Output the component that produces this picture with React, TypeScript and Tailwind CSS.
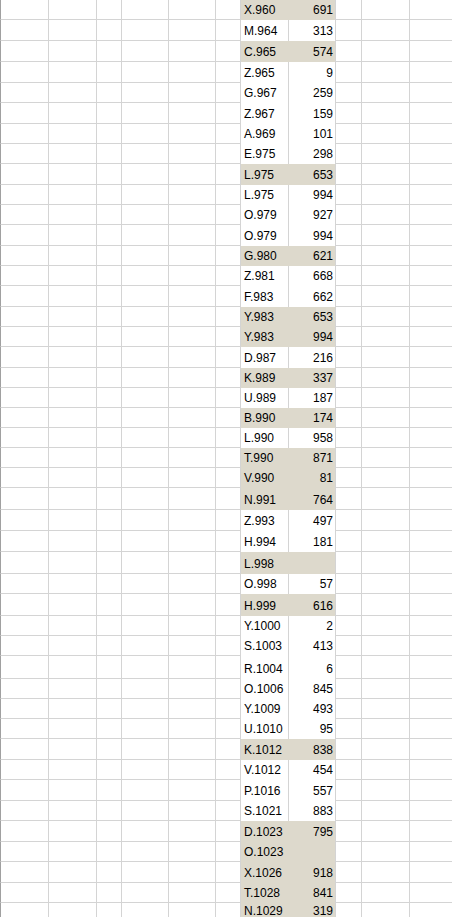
import React from "react";

type Row = { name: string; value: string; hl: boolean; h: number };

const names = [
  "X.960","M.964","C.965","Z.965","G.967","Z.967","A.969","E.975","L.975","L.975",
  "O.979","O.979","G.980","Z.981","F.983","Y.983","Y.983","D.987","K.989","U.989",
  "B.990","L.990","T.990","V.990","N.991","Z.993","H.994","L.998","O.998","H.999",
  "Y.1000","S.1003","R.1004","O.1006","Y.1009","U.1010","K.1012","V.1012","P.1016","S.1021",
  "D.1023","O.1023","X.1026","T.1028","N.1029",
];
const values = [
  "691","313","574","9","259","159","101","298","653","994",
  "927","994","621","668","662","653","994","216","337","187",
  "174","958","871","81","764","497","181","","57","616",
  "2","413","6","845","493","95","838","454","557","883",
  "795","","918","841","319",
];
const hlIdx = new Set([0,2,8,12,15,16,18,20,22,23,24,27,29,36,40,41,42,43,44]);
const heights = [
  20,
  21,21,21,20,21,20,20,21,20,20,
  21,20,20,21,20,20,21,20,20,20,
  20,20,20,22,21,21,22,20,22,20,
  20,23,20,20,20,21,20,21,20,21,
  20,21,20,
  15,
];

const rows: Row[] = names.map((n, i) => ({
  name: n,
  value: values[i],
  hl: hlIdx.has(i),
  h: heights[i],
}));

const grid = "border-[#d4d4d4]";

function GridRow({ r, last }: { r: Row; last: boolean }) {
  const bg = r.hl ? "bg-[#ddd9cc]" : "bg-white";
  const pb = last ? "pb-0" : "pb-[3px]";
  return (
    <div className="flex w-full shrink-0" style={{ height: r.h }}>
      <div className={`w-[49px] shrink-0 border-l border-l-[#a0a0a0] border-r border-b ${grid}`} />
      <div className={`w-[48px] shrink-0 border-r border-b ${grid}`} />
      <div className={`w-[25px] shrink-0 border-r border-b ${grid}`} />
      <div className={`w-[47px] shrink-0 border-r border-b ${grid}`} />
      <div className={`w-[47px] shrink-0 border-r border-b ${grid}`} />
      <div className={`w-[25px] shrink-0 border-r border-b ${grid}`} />
      <div
        className={`w-[48px] shrink-0 flex items-end pl-[3px] ${pb} ${bg} ${
          r.hl ? "" : `border-r ${grid}`
        }`}
      >
        <span className="leading-[14px]">{r.name}</span>
      </div>
      <div className={`w-[47px] shrink-0 flex items-end justify-end pr-[2px] ${pb} border-r ${grid} ${bg}`}>
        <span className="leading-[14px]">{r.value}</span>
      </div>
      <div className={`w-[26px] shrink-0 border-r border-b ${grid}`} />
      <div className={`w-[48px] shrink-0 border-r border-b ${grid}`} />
      <div className={`flex-1 border-b ${grid}`} />
    </div>
  );
}

export default function App() {
  return (
    <div
      className="w-[452px] h-[917px] overflow-hidden bg-white text-[12px] text-black"
      style={{ fontFamily: '"Liberation Sans", Arial, sans-serif' }}
    >
      {rows.map((r, i) => (
        <GridRow key={i} r={r} last={i === rows.length - 1} />
      ))}
    </div>
  );
}
